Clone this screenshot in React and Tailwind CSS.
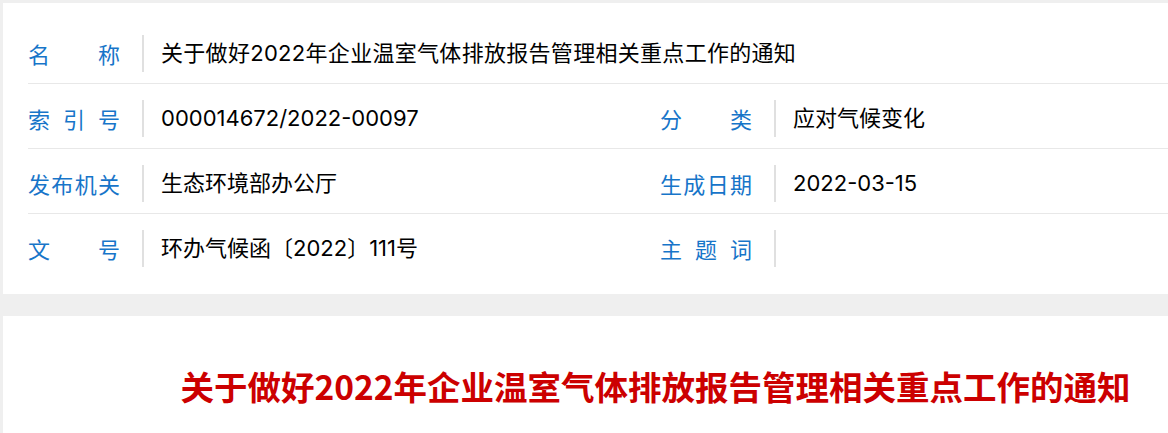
import React from 'react';

const FONT = { fontFamily: '"Noto Sans CJK SC", "Noto Sans", sans-serif' };
const VALUE_FONT = { fontFamily: 'Inter, "Noto Sans CJK SC", sans-serif' };

const Label = ({ chars }) => (
  <div className="flex w-[92px] shrink-0 justify-between text-[22px] leading-[37px] text-[#1775c9]">
    {chars.map((c, i) => (
      <span key={i}>{c}</span>
    ))}
  </div>
);

const Cell = ({ label, value, className = '', valueClass = '' }) => (
  <div className={`flex items-start pt-[16px] ${className}`}>
    <Label chars={label} />
    <div className="ml-[22px] h-[37px] w-[2px] shrink-0 bg-[#e0e0e0]" />
    <div className={`ml-[17px] text-[22px] leading-[37px] text-black ${valueClass}`} style={VALUE_FONT}>
      {value}
    </div>
  </div>
);

const rows = [
  [
    { label: ['索', '引', '号'], value: '000014672/2022-00097' },
    { label: ['分', '类'], value: '应对气候变化' },
  ],
  [
    { label: ['发', '布', '机', '关'], value: '生态环境部办公厅' },
    { label: ['生', '成', '日', '期'], value: '2022-03-15' },
  ],
  [
    { label: ['文', '号'], value: '环办气候函〔2022〕111号' },
    { label: ['主', '题', '词'], value: '' },
  ],
];

export default function App() {
  return (
    <div className="min-h-screen w-[1320px] bg-[#efefef] pl-[3px] pt-[3px]" style={FONT}>
      {/* Info table */}
      <div className="w-[1305px] bg-white px-[25px] pb-[15px] pt-[16px]">
        <div className="h-[65px] border-b border-[#e8e8e8]">
          <Cell
            label={['名', '称']}
            value="关于做好2022年企业温室气体排放报告管理相关重点工作的通知"
            valueClass="tracking-[0.3px]"
          />
        </div>
        {rows.map((row, i) => (
          <div
            key={i}
            className={`flex h-[65px] ${i < rows.length - 1 ? 'border-b border-[#e8e8e8]' : ''}`}
          >
            <Cell label={row[0].label} value={row[0].value} className="w-[632px]" />
            <Cell label={row[1].label} value={row[1].value} className="flex-1" />
          </div>
        ))}
      </div>

      {/* Article */}
      <div className="mt-[22px] h-[200px] w-[1305px] bg-white pt-[46px]">
        <h1 className="text-center text-[33.5px] font-bold leading-[48px] text-[#cc0000]">
          关于做好2022年企业温室气体排放报告管理相关重点工作的通知
        </h1>
      </div>
    </div>
  );
}
